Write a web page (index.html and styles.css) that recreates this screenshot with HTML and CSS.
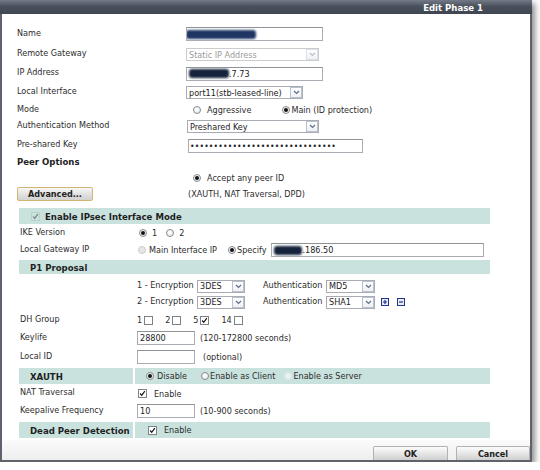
FILE: index.html
```html
<!DOCTYPE html>
<html>
<head>
<meta charset="utf-8">
<link rel="stylesheet" href="styles.css">
</head>
<body>
<div class="dialog">
  <div class="titlebar"><span class="title">Edit Phase 1</span></div>
  <div class="top">
    <div class="row h20"><div class="lbl">Name</div><div class="inp w137"><span class="blob bn"></span></div></div>
    <div class="row h21"><div class="lbl">Remote Gateway</div><div class="sel dis w133"><span class="txt">Static IP Address</span><span class="arr"><svg width="7" height="5" viewBox="0 0 7 5"><path d="M1 1 L3.5 3.5 L6 1" stroke="#b8c0cc" stroke-width="1.2" fill="none"/></svg></span></div></div>
    <div class="row h17"><div class="lbl">IP Address</div><div class="inp w137"><span class="blob bip"></span><span>.7.73</span></div></div>
    <div class="row h21"><div class="lbl">Local Interface</div><div class="sel w117"><span class="txt">port11(stb-leased-line)</span><span class="arr"><svg width="7" height="5" viewBox="0 0 7 5"><path d="M1 1 L3.5 3.5 L6 1" stroke="#60708a" stroke-width="1.2" fill="none"/></svg></span></div></div>
    <div class="row h14"><div class="lbl">Mode</div><div class="opts"><span class="radio m7"></span><span class="otxt">Aggressive</span><span class="radio on m31"></span><span class="otxt t2">Main (ID protection)</span></div></div>
    <div class="row h19"><div class="lbl">Authentication Method</div><div class="sel w132 ml1"><span class="txt">Preshared Key</span><span class="arr"><svg width="7" height="5" viewBox="0 0 7 5"><path d="M1 1 L3.5 3.5 L6 1" stroke="#60708a" stroke-width="1.2" fill="none"/></svg></span></div></div>
    <div class="row h19"><div class="lbl">Pre-shared Key</div><div class="inp w175 ml2 dots">•••••••••••••••••••••••••••••••</div></div>
    <div class="row h16"><div class="lbl bold">Peer Options</div></div>
    <div class="row h14"><div class="lbl"></div><div class="opts"><span class="radio on m7"></span><span class="otxt">Accept any peer ID</span></div></div>
    <div class="row h18"><div class="lbl"><div class="advbtn">Advanced...</div></div><div class="note ml2">(XAUTH, NAT Traversal, DPD)</div></div>
  </div>

  <div class="bar b16 gap5"><span class="cb faint"><svg width="7" height="7" viewBox="0 0 9 9"><path d="M1.5 4.5 L3.5 6.8 L7.5 1.5" stroke="#777" stroke-width="1.4" fill="none"/></svg></span><span class="btxt">Enable IPsec Interface Mode</span></div>

  <div class="sec">
    <div class="row h18"><div class="lbl2">IKE Version</div><div class="opts"><span class="radio on ml2"></span><span class="otxt g5">1</span><span class="radio m9"></span><span class="otxt g5">2</span></div></div>
    <div class="row h16"><div class="lbl2">Local Gateway IP</div><div class="opts"><span class="radio dis ml1"></span><span class="otxt g3">Main Interface IP</span><span class="radio on m11"></span><span class="otxt g1">Specify</span><div class="inp w213 ml5"><span class="blob bsp"></span><span>.186.50</span></div></div></div>
  </div>

  <div class="bar b14 gap2"><span class="btxt p10">P1 Proposal</span></div>

  <div class="sec">
    <div class="row h20 pt4"><div class="lbl2"></div><div class="opts"><span class="enc">1 - Encryption</span><div class="sel w48"><span class="txt">3DES</span><span class="arr"><svg width="7" height="5" viewBox="0 0 7 5"><path d="M1 1 L3.5 3.5 L6 1" stroke="#60708a" stroke-width="1.2" fill="none"/></svg></span></div><span class="auth">Authentication</span><div class="sel w49"><span class="txt">MD5</span><span class="arr"><svg width="7" height="5" viewBox="0 0 7 5"><path d="M1 1 L3.5 3.5 L6 1" stroke="#60708a" stroke-width="1.2" fill="none"/></svg></span></div></div></div>
    <div class="row h16"><div class="lbl2"></div><div class="opts"><span class="enc">2 - Encryption</span><div class="sel w48"><span class="txt">3DES</span><span class="arr"><svg width="7" height="5" viewBox="0 0 7 5"><path d="M1 1 L3.5 3.5 L6 1" stroke="#60708a" stroke-width="1.2" fill="none"/></svg></span></div><span class="auth">Authentication</span><div class="sel w49"><span class="txt">SHA1</span><span class="arr"><svg width="7" height="5" viewBox="0 0 7 5"><path d="M1 1 L3.5 3.5 L6 1" stroke="#60708a" stroke-width="1.2" fill="none"/></svg></span></div>
      <svg class="icon plus" width="8" height="8" viewBox="0 0 8 8"><rect x="0.5" y="0.5" width="7" height="7" fill="#e8ecf8" stroke="#22348a"/><path d="M2 4 H6 M4 2 V6" stroke="#22348a" stroke-width="1.2"/></svg>
      <svg class="icon minus" width="8" height="8" viewBox="0 0 8 8"><rect x="0.5" y="0.5" width="7" height="7" fill="#e8ecf8" stroke="#22348a"/><path d="M2 4 H6" stroke="#22348a" stroke-width="1.2"/></svg>
    </div></div>
    <div class="row h20"><div class="lbl2">DH Group</div><div class="opts"><span class="num">1</span><span class="cb"></span><span class="num n1">2</span><span class="cb"></span><span class="num n1">5</span><span class="cb"><svg width="7" height="7" viewBox="0 0 9 9"><path d="M1.5 4.5 L3.5 6.8 L7.5 1.5" stroke="#111" stroke-width="1.5" fill="none"/></svg></span><span class="num n1">14</span><span class="cb"></span></div></div>
    <div class="row h16"><div class="lbl2">Keylife</div><div class="opts"><div class="inp w58">28800</div><span class="note ml5">(120-172800 seconds)</span></div></div>
    <div class="row h22"><div class="lbl2">Local ID</div><div class="opts"><div class="inp w58"></div><span class="note ml8">(optional)</span></div></div>
  </div>

  <div class="bar b16 split">
    <div class="cellL"><span class="btxt">XAUTH</span></div>
    <div class="cellR p11"><span class="radio on"></span><span class="otxt g3">Disable</span><span class="radio m14"></span><span class="otxt g1">Enable as Client</span><span class="radio faintr m9"></span><span class="otxt g1">Enable as Server</span></div>
  </div>

  <div class="sec">
    <div class="row h19"><div class="lbl2">NAT Traversal</div><div class="opts"><span class="cb ml1"><svg width="7" height="7" viewBox="0 0 9 9"><path d="M1.5 4.5 L3.5 6.8 L7.5 1.5" stroke="#111" stroke-width="1.5" fill="none"/></svg></span><span class="otxt g7">Enable</span></div></div>
    <div class="row h16"><div class="lbl2">Keepalive Frequency</div><div class="opts"><div class="inp w58">10</div><span class="note ml5">(10-900 seconds)</span></div></div>
  </div>

  <div class="bar b16 split gap3">
    <div class="cellL"><span class="btxt">Dead Peer Detection</span></div>
    <div class="cellR p13"><span class="cb"><svg width="7" height="7" viewBox="0 0 9 9"><path d="M1.5 4.5 L3.5 6.8 L7.5 1.5" stroke="#111" stroke-width="1.5" fill="none"/></svg></span><span class="otxt g7">Enable</span></div>
  </div>

  <div class="footer">
    <div class="btn ok">OK</div>
    <div class="btn cancel">Cancel</div>
  </div>
</div>
</body>
</html>
```

FILE: styles.css
```css
* { box-sizing: border-box; }
html, body { margin: 0; padding: 0; background: #fff; }
body {
  font-family: "DejaVu Sans Condensed", "DejaVu Sans", sans-serif;
  font-stretch: condensed;
  font-size: 9px;
  color: #2c2c2c;
}
.dialog {
  width: 532px;
  height: 462px;
  border: 2px solid #5e626a;
  border-top: 0;
  background: #fff;
  box-shadow: 3px 3px 6px rgba(0,0,0,0.45);
  display: flex;
  flex-direction: column;
}
.titlebar {
  height: 14px;
  flex: none;
  background: linear-gradient(#737b88, #4a515d 45%, #3f4651);
  display: flex;
  align-items: center;
  justify-content: flex-end;
  padding-right: 49px;
  margin: 0 -2px;
}
.title { color: #fff; font-weight: bold; font-size: 9.5px; }
.top { padding-top: 10px; }
.row { display: flex; align-items: center; flex: none; }
.top .row { padding-left: 15px; }
.sec .row { padding-left: 18px; }
.lbl { width: 169px; flex: none; padding-bottom: 3px; }
.lbl2 { width: 117px; flex: none; padding-bottom: 3px; }
.bold { font-weight: bold; color: #222; font-size: 9.5px; }
.h14 { height: 14px; } .h16 { height: 16px; } .h17 { height: 17px; }
.h18 { height: 18px; } .h19 { height: 19px; } .h20 { height: 20px; }
.h21 { height: 21px; } .h22 { height: 22px; }
.pt4 { padding-top: 4px; }
.ml1 { margin-left: 1px; } .ml2 { margin-left: 2px; } .ml5 { margin-left: 5px; } .ml8 { margin-left: 8px; }

.inp {
  height: 14px;
  border: 1px solid #a9adb3;
  border-top-color: #8e939a;
  background: #fff;
  display: flex;
  align-items: center;
  padding-left: 2px;
  color: #222;
  white-space: nowrap;
  overflow: hidden;
}
.w58 { width: 58px; } .w137 { width: 137px; } .w175 { width: 175px; } .w213 { width: 213px; }
.w48 { width: 48px; } .w49 { width: 49px; } .w117 { width: 117px; } .w132 { width: 132px; } .w133 { width: 133px; }
.dots { font-size: 8.5px; letter-spacing: 0.2px; padding-left: 1px; }
.blob {
  display: inline-block;
  height: 9px;
  background: #16233d;
  border-radius: 3px;
  filter: blur(1.1px);
}
.bn { width: 70px; margin-left: -3px; background: #1f3563; }
.bip { width: 40px; }
.bsp { width: 28px; margin-left: 0; }

.sel {
  height: 13px;
  border: 1px solid #a9adb3;
  background: #fff;
  display: flex;
  align-items: center;
  color: #222;
}
.sel .txt { flex: 1; padding-left: 2px; white-space: nowrap; overflow: hidden; }
.sel .arr {
  width: 12px; height: 11px;
  margin-right: 0;
  border: 1px solid #b9c2ce;
  background: linear-gradient(#ffffff, #eef1f5);
  display: flex; align-items: center; justify-content: center;
  flex: none;
}
.sel.dis { border-color: #c9ccd0; }
.sel.dis .txt { color: #9a9a9a; }
.sel.dis .arr { border-color: #dde1e6; }

.opts { display: flex; align-items: center; }
.radio {
  width: 8px; height: 8px;
  border-radius: 50%;
  border: 1px solid #858a90;
  background: radial-gradient(circle at 40% 35%, #fff, #e4e6e9);
  display: inline-flex; align-items: center; justify-content: center;
  flex: none;
}
.radio.on::after { content: ""; width: 4px; height: 4px; border-radius: 50%; background: #111; }
.radio.dis { border-color: #c9cccf; background: #e6e7e9; }
.radio.faintr { border-color: #d8e6e4; background: #e9f2f1; }
.otxt { margin-left: 6px; }
.otxt.t2 { margin-left: 1px; }
.g1 { margin-left: 1px; } .g3 { margin-left: 3px; } .g5 { margin-left: 5px; } .g7 { margin-left: 7px; }
.m7 { margin-left: 7px; } .m9 { margin-left: 9px; } .m11 { margin-left: 11px; } .m14 { margin-left: 14px; } .m31 { margin-left: 31px; }

.cb {
  width: 9px; height: 9px;
  border: 1px solid #7d8289;
  background: #fff;
  display: inline-flex; align-items: center; justify-content: center;
  flex: none;
}
.cb.faint { border-color: #b9d2ce; background: transparent; }
.num { margin-right: 2px; }
.n1 { margin-left: 12px; }

.note { color: #2c2c2c; }
.enc { width: 60px; flex: none; padding-bottom: 3px; }
.auth { width: 63px; margin-left: 18px; flex: none; padding-bottom: 3px; }
.icon { display: block; flex: none; }
.plus { margin-left: 6px; }
.minus { margin-left: 8px; }

.advbtn {
  width: 76px; height: 14px;
  border: 1px solid #d2b56e;
  border-radius: 2px;
  background: linear-gradient(#f7f7f7, #dedede 60%, #d2d2d2);
  font-weight: bold;
  color: #222;
  display: flex; align-items: center; justify-content: center;
  margin-top: 3px;
}

.bar {
  margin-left: 17px;
  width: 471px;
  background: #cae2de;
  display: flex;
  align-items: center;
  flex: none;
  color: #1e1e1e;
}
.b16 { height: 16px; } .b14 { height: 14px; }
.gap5 { margin-top: 5px; } .gap2 { margin-top: 2px; } .gap3 { margin-top: 3px; }
.bar > .cb { margin-left: 12px; }
.btxt { font-weight: bold; font-size: 9.5px; margin-left: 5px; }
.p10 { margin-left: 11px; }
.split { background: transparent; }
.cellL { width: 114px; height: 100%; background: #cae2de; display: flex; align-items: center; flex: none; }
.cellL .btxt { margin-left: 11px; }
.cellR { flex: 1; height: 100%; margin-left: 2px; background: #cae2de; display: flex; align-items: center; color: #2c2c2c; }
.p11 { padding-left: 11px; }
.p13 { padding-left: 13px; }

.footer {
  margin-top: auto;
  height: 20px;
  flex: none;
  background: linear-gradient(#fbfbfb, #eeeeee);
  display: flex;
  justify-content: flex-end;
  align-items: flex-end;
  gap: 8px;
  padding-right: 0;
}
.btn {
  height: 14px;
  border: 1px solid #aeb1b5;
  border-bottom: 0;
  border-radius: 2px 2px 0 0;
  background: linear-gradient(#fdfdfd, #e4e4e4 55%, #cfcfcf);
  font-weight: bold;
  color: #222;
  display: flex; align-items: center; justify-content: center;
}
.ok { width: 75px; }
.cancel { width: 74px; }
```
